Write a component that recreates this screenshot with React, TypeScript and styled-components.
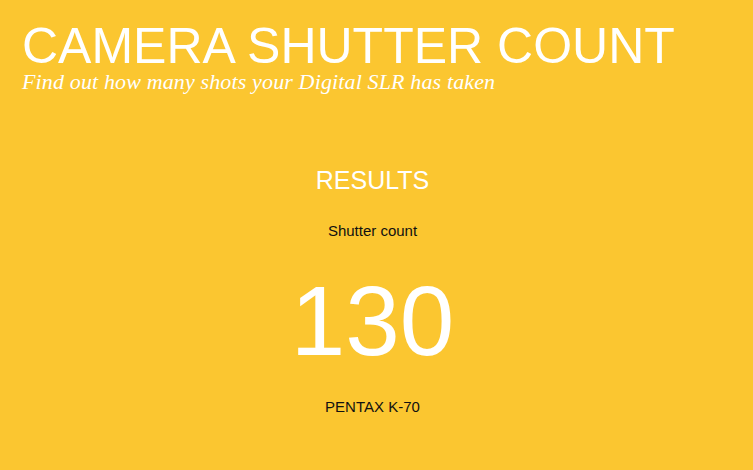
import React from "react";
import styled, { createGlobalStyle } from "styled-components";

const Global = createGlobalStyle`
  html, body { margin: 0; padding: 0; background: #fbc630; }
  body { font-family: "Liberation Sans", Arial, sans-serif; }
`;

const Page = styled.div`
  width: 753px;
  height: 470px;
  background: #fbc630;
  display: flex;
  flex-direction: column;
  overflow: hidden;
`;

const Header = styled.header`
  padding: 20px 0 0 22px;
  display: flex;
  flex-direction: column;
`;

const Title = styled.h1`
  margin: 0;
  font-family: "Liberation Sans", Arial, sans-serif;
  font-weight: 400;
  font-size: 50px;
  line-height: 52px;
  color: #ffffff;
`;

const Subtitle = styled.p`
  margin: 0;
  font-family: "Liberation Serif", Georgia, serif;
  font-style: italic;
  font-size: 22px;
  line-height: 20px;
  letter-spacing: 0.14px;
  color: #ffffff;
`;

const Results = styled.section`
  display: flex;
  flex-direction: column;
  align-items: center;
  padding: 74px 8px 0 0;
`;

const ResultsTitle = styled.h2`
  margin: 0;
  font-weight: 400;
  font-size: 25px;
  line-height: 28px;
  color: #ffffff;
`;

const Label = styled.div<{ $top: number }>`
  margin-top: ${(p) => p.$top}px;
  font-size: 15px;
  line-height: 17px;
  color: #111;
`;

const Count = styled.div`
  margin-top: 28.5px;
  font-size: 98px;
  line-height: 106px;
  color: #ffffff;
`;

export default function App() {
  return (
    <Page>
      <Global />
      <Header>
        <Title>CAMERA SHUTTER COUNT</Title>
        <Subtitle>Find out how many shots your Digital SLR has taken</Subtitle>
      </Header>
      <Results>
        <ResultsTitle>RESULTS</ResultsTitle>
        <Label $top={28}>Shutter count</Label>
        <Count>130</Count>
        <Label $top={24}>PENTAX K-70</Label>
      </Results>
    </Page>
  );
}
